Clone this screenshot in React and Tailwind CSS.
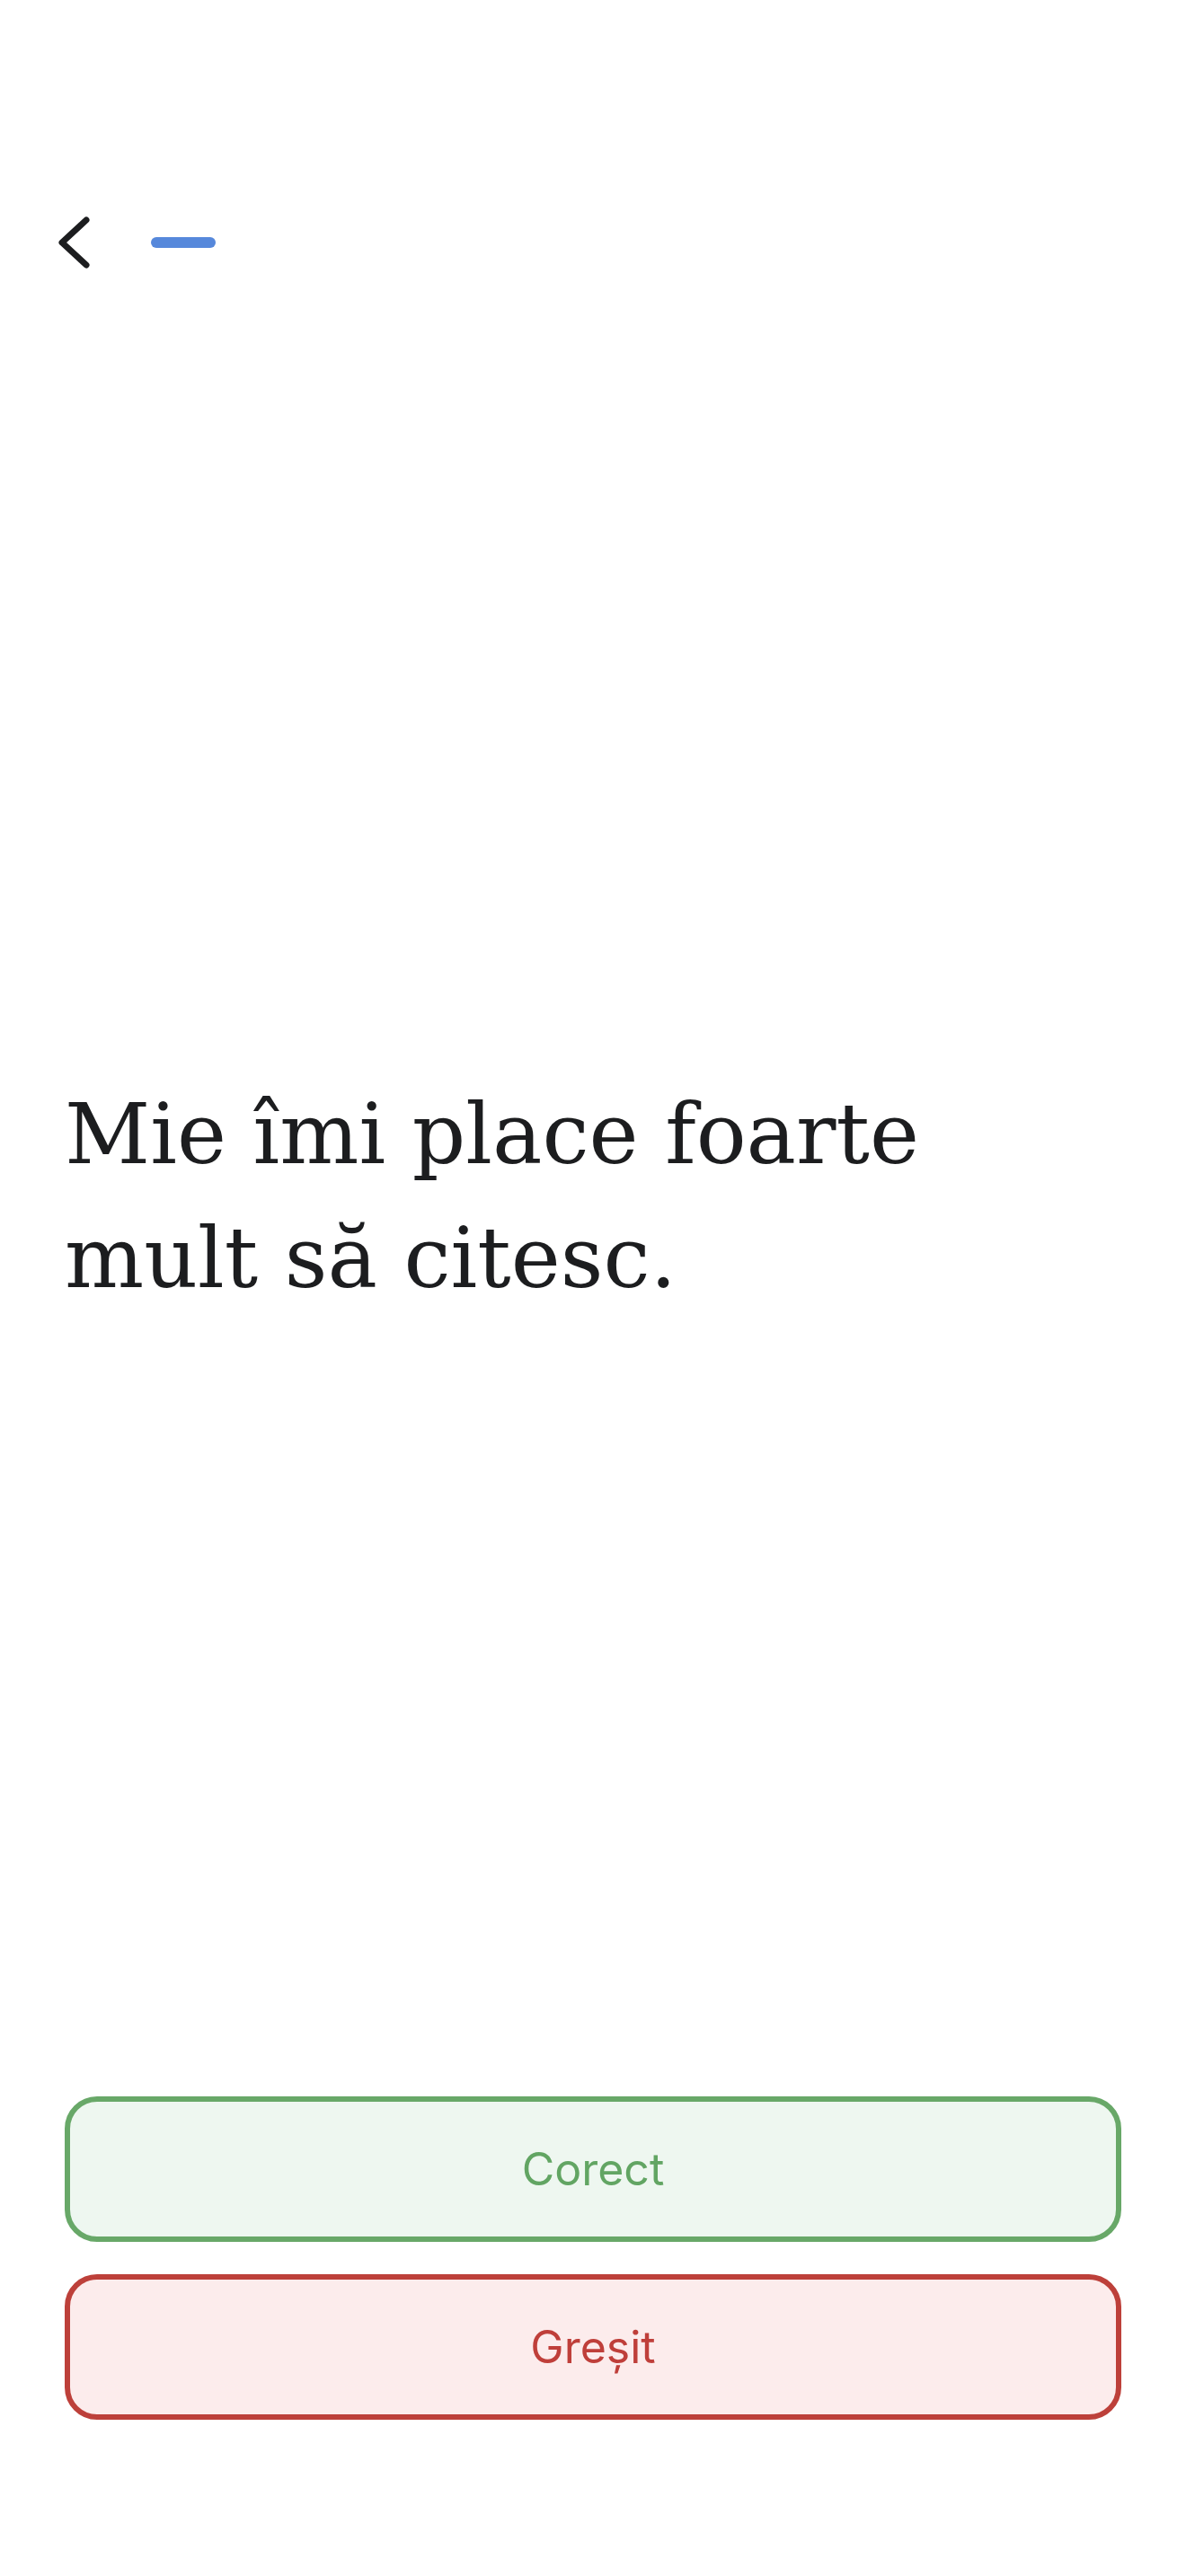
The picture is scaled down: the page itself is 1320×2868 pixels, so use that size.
import React from "react";

function BackChevron() {
  return (
    <svg width="40" height="64" viewBox="0 0 40 64" fill="none" className="-ml-[8px] shrink-0">
      <path d="M32 7 L5 32 L32 57" stroke="#1c1d1f" strokeWidth="7" strokeLinecap="round" strokeLinejoin="round" />
    </svg>
  );
}

export default function App() {
  return (
    <div className="w-full h-[2868px] bg-white flex flex-col px-[72px]">
      {/* top bar: back + progress */}
      <header className="flex items-center h-[64px] mt-[238px] gap-[64px]">
        <BackChevron />
        <div className="w-[72px] h-[12px] rounded-full bg-[#5688db]" />
      </header>

      {/* sentence card */}
      <p
        className="mt-[892px] pr-[60px] text-[93px] leading-[138px] text-[#1c1d1f]"
        style={{ fontFamily: '"DejaVu Serif", "Liberation Serif", serif' }}
      >
        Mie îmi place foarte mult să citesc.
      </p>

      <div className="flex-1" />

      {/* answers */}
      <div className="flex flex-col gap-[36px] mb-[174px]" style={{ fontFamily: 'Inter, "Noto Sans", sans-serif' }}>
        <button className="h-[162px] w-full rounded-[36px] border-[6px] border-[#68a868] bg-[#eef7f0] text-[50px] text-[#62a563]">
          Corect
        </button>
        <button className="h-[162px] w-full rounded-[36px] border-[6px] border-[#bd403a] bg-[#fcecec] text-[50px] text-[#bf3f3a]">
          Greșit
        </button>
      </div>
    </div>
  );
}
